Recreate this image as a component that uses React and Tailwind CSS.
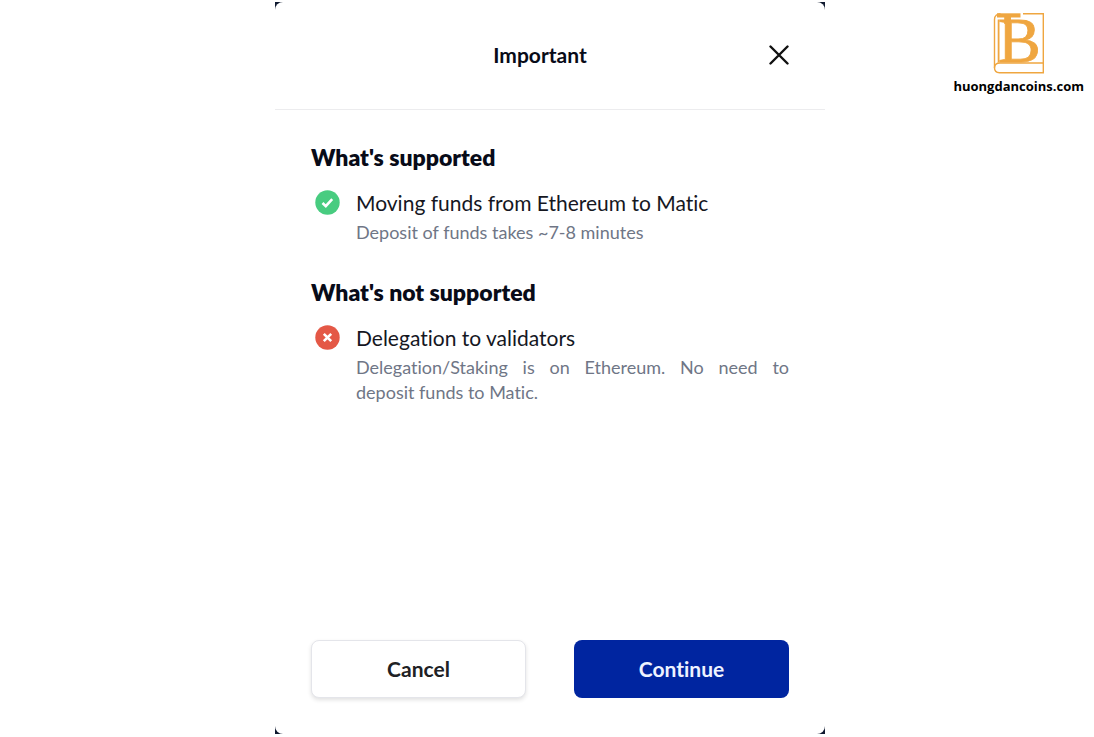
import React from "react";

function BookLogo() {
  return (
    <svg className="-mb-1" width="52" height="74" viewBox="0 -8 52 74" fill="none" aria-hidden="true">
      <g stroke="#efa640">
        <path d="M30 1.7H50.3V60.8H6.5C3 60.8 1.5 58.5 1.5 55.8V7.5C1.5 3.6 4 1.8 7.5 1.8" strokeWidth="1.4" />
        <path d="M1.5 55.8C1.5 52.5 4 51 7 51H50" strokeWidth="1.5" />
        <path d="M5.6 50.5V7.5" strokeWidth="1.8" />
        <path d="M4 3.4H27.5" strokeWidth="4.2" />
        <path d="M14.6 4V12" strokeWidth="6.8" />
      </g>
      <text x="5" y="50" fontSize="64" fill="#efa640" stroke="#efa640" strokeWidth="0.8" fontFamily="Liberation Serif, serif">B</text>
    </svg>
  );
}

function StatusIcon({ ok }) {
  return (
    <svg className="mt-[3px] shrink-0" width="25" height="25" viewBox="0 0 25 25" fill="none" aria-hidden="true">
      <circle cx="12.5" cy="12.5" r="12.2" fill={ok ? "#48cc80" : "#e45846"} />
      <path
        d={ok ? "M7.5 13L10.8 16.2L17.2 9.2" : "M8.8 8.8L16.2 16.2M16.2 8.8L8.8 16.2"}
        stroke="#fff"
        strokeWidth="2.6"
      />
    </svg>
  );
}

function Section({ title, ok, name, children }) {
  return (
    <section>
      <h2 className="text-[23px] leading-8 font-extrabold">{title}</h2>
      <div className="mt-3.5 flex gap-4 pl-1">
        <StatusIcon ok={ok} />
        <div className="flex-1">
          <h3 className="text-[21px] leading-8 text-[#15171f]">{name}</h3>
          <p className="mt-px text-justify text-[18px] leading-[25px] text-[#6f7686]">{children}</p>
        </div>
      </div>
    </section>
  );
}

export default function App() {
  return (
    <main className="relative flex min-h-screen justify-center bg-white pt-0.5 pb-[3px] pl-1.5 font-[Lato,sans-serif] text-[#080b18] [font-variant-ligatures:none]">
      <div className="flex w-full max-w-[550px] bg-[#101a30]">
        <div role="dialog" aria-labelledby="dialog-title" className="flex w-full flex-col rounded-lg bg-white">
          <header className="grid grid-cols-[1fr_auto_1fr] items-center border-b border-[#ececee] px-9 pt-[33px] pb-[34px]">
            <span />
            <h1 id="dialog-title" className="pr-5 text-[21px] leading-10 font-bold">Important</h1>
            <button type="button" aria-label="Close" className="justify-self-end">
              <svg width="20" height="20" viewBox="0 0 20 20" fill="none" stroke="#101010" strokeWidth="2.4" strokeLinecap="round">
                <path d="M1.5 1.5L18.5 18.5M18.5 1.5L1.5 18.5" />
              </svg>
            </button>
          </header>
          <div className="flex flex-1 flex-col gap-[31px] px-9 pt-[31px]">
            <Section title="What's supported" ok name="Moving funds from Ethereum to Matic">
              Deposit of funds takes ~7-8 minutes
            </Section>
            <Section title="What's not supported" name="Delegation to validators">
              Delegation/Staking is on Ethereum. No need to deposit funds to Matic.
            </Section>
          </div>
          <footer className="grid grid-cols-2 gap-12 px-9 pb-9">
            <button type="button" className="h-[58px] rounded-lg border border-[#e4e5ea] bg-white text-[21px] font-bold text-[#202124] shadow-[0_2px_4px_rgba(0,0,0,0.12)]">
              Cancel
            </button>
            <button type="button" className="h-[58px] rounded-lg bg-[#0025a0] text-[21px] font-bold text-[#eef3ff]">
              Continue
            </button>
          </footer>
        </div>
      </div>
      <div className="absolute top-1 right-2.5 flex flex-col items-center text-black">
        <BookLogo />
        <span className="font-['Open_Sans',sans-serif] text-[13px] leading-6 font-bold">huongdancoins.com</span>
      </div>
    </main>
  );
}
